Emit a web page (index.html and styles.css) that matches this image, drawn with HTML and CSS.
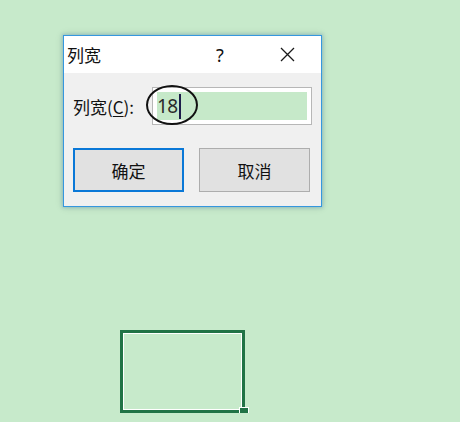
FILE: index.html
```html
<!DOCTYPE html>
<html>

<head>
    <meta charset="utf-8">
    <title>列宽</title>
    <link rel="stylesheet" href="styles.css">
</head>

<body>
    <div class="page">
        <div class="dialog">
            <div class="titlebar">
                <span class="title">列宽</span>
                <span class="help">?</span>
                <span class="close">
                    <svg width="15" height="15" viewBox="0 0 15 15">
                        <path d="M1 1 L14 14 M14 1 L1 14" stroke="#1a1a1a" stroke-width="1.3" fill="none" />
                    </svg>
                </span>
            </div>
            <div class="content">
                <div class="row">
                    <label class="label">列宽(<u>C</u>):</label>
                    <div class="input">
                        <div class="selection"><span class="value">18</span><span class="caret"></span></div>
                        <div class="circle"></div>
                    </div>
                </div>
                <div class="buttons">
                    <button class="btn btn-default">确定</button>
                    <button class="btn">取消</button>
                </div>
            </div>
        </div>
        <div class="cell">
            <div class="handle"></div>
        </div>
    </div>
</body>

</html>
```

FILE: styles.css
```css
* {
    box-sizing: border-box;
    --green-bg: #c7eacb;
    --excel-green: #217346;
    --accent: #3597de;
}

body {
    margin: 0;
    background-color: var(--green-bg);
    font-family: "Noto Sans CJK SC", "Noto Sans", sans-serif;
    color: #111;
    overflow: hidden;
}

.page {
    padding: 35px 0 0 63px;
}

.dialog {
    width: 259px;
    height: 172px;
    border: 1px solid var(--accent);
    background: #f0f0f0;
    box-shadow: 0 0 3px 1px rgba(40, 120, 200, 0.25), 0 0 8px rgba(0, 0, 0, 0.15);
}

.titlebar {
    height: 37px;
    background: #fff;
    display: flex;
    align-items: center;
    padding: 0 11px 0 3px;
}

.title {
    flex: 1;
    font-size: 17px;
    line-height: 20px;
}

.help {
    width: 46px;
    text-align: center;
    font-family: "Noto Sans", sans-serif;
    font-size: 18px;
    line-height: 20px;
    margin-right: 21px;
}

.close {
    width: 46px;
    display: flex;
    justify-content: center;
}

.content {
    padding: 14px 9px 0 9px;
}

.row {
    display: flex;
    align-items: center;
    height: 38px;
}

.label {
    width: 79px;
    flex: none;
    font-size: 17px;
}

.label u {
    text-underline-offset: 2px;
}

.input {
    position: relative;
    width: 160px;
    height: 38px;
    border: 1px solid #b7b7b7;
    background: #fff;
    padding: 4px;
}

.selection {
    height: 28px;
    background: #c6e9c9;
    display: flex;
    align-items: center;
}

.value {
    font-family: "Noto Sans", sans-serif;
    font-size: 19px;
    color: #2a2a2a;
    letter-spacing: -0.5px;
}

.caret {
    width: 2px;
    height: 25px;
    background: #1d1d4a;
    margin-left: 1px;
}

.circle {
    position: absolute;
    left: -7px;
    top: -3px;
    width: 52px;
    height: 40px;
    border: 2.5px solid #111;
    border-radius: 50%;
}

.buttons {
    display: flex;
    gap: 15px;
    margin-top: 23px;
}

.btn {
    width: 111px;
    height: 44px;
    background: #e1e1e1;
    border: 1px solid #adadad;
    font-family: "Noto Sans CJK SC", sans-serif;
    font-size: 17px;
    color: #111;
    padding: 0;
}

.btn-default {
    border: 2px solid #0a78d7;
}

.cell {
    position: relative;
    margin: 123px 0 0 57px;
    width: 125px;
    height: 83px;
    border: 3px solid var(--excel-green);
    box-shadow: inset 0 0 0 1px #fff;
}

.handle {
    position: absolute;
    right: -7px;
    bottom: -7px;
    width: 10px;
    height: 10px;
    background: var(--excel-green);
    border: 1px solid #fff;
}
```
